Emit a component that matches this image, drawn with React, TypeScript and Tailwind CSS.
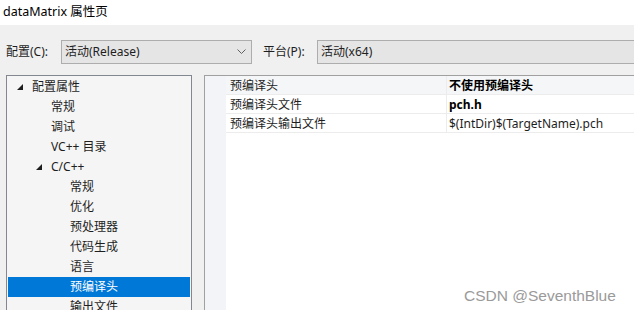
import React from 'react';

const font = "font-['Noto_Sans','Noto_Sans_CJK_SC',sans-serif]";

const Triangle = () => (
  <svg width="6" height="6" viewBox="0 0 6 6" className="shrink-0">
    <polygon points="6,0 6,6 0,6" fill="#1e1e1e" />
  </svg>
);

type Node = { label: string; level: number; expanded?: boolean; selected?: boolean };

const tree: Node[] = [
  { label: '配置属性', level: 0, expanded: true },
  { label: '常规', level: 1 },
  { label: '调试', level: 1 },
  { label: 'VC++ 目录', level: 1 },
  { label: 'C/C++', level: 1, expanded: true },
  { label: '常规', level: 2 },
  { label: '优化', level: 2 },
  { label: '预处理器', level: 2 },
  { label: '代码生成', level: 2 },
  { label: '语言', level: 2 },
  { label: '预编译头', level: 2, selected: true },
  { label: '输出文件', level: 2 },
];

const indent = ['pl-[9px]', 'pl-[28px]', 'pl-[47px]'];

const rows = [
  { name: '预编译头', value: '不使用预编译头', bold: true },
  { name: '预编译头文件', value: 'pch.h', bold: true },
  { name: '预编译头输出文件', value: '$(IntDir)$(TargetName).pch', bold: false },
];

const App = () => {
  return (
    <div className={`w-[634px] h-[310px] overflow-hidden bg-[#f0f0f0] text-[12px] text-[#1e1e1e] relative ${font}`}>
      {/* title */}
      <div className="h-[25px] bg-white flex items-center pl-[3px] text-[12.5px] text-black">
        dataMatrix 属性页
      </div>

      {/* config row */}
      <div className="flex items-center mt-[15px] h-[24px] whitespace-nowrap">
        <span className="w-[61px] shrink-0 pl-[6px]">配置(C):</span>
        <div className="w-[191px] shrink-0 h-[24px] border border-[#adadad] bg-[#e5e5e5] flex items-center justify-between pl-[3px] pr-[5px]">
          <span>活动(Release)</span>
          <svg width="9" height="6" viewBox="0 0 9 6">
            <polyline points="0.5,0.5 4.5,4.5 8.5,0.5" fill="none" stroke="#606060" strokeWidth="1" />
          </svg>
        </div>
        <span className="w-[65px] shrink-0 pl-[11px]">平台(P):</span>
        <div className="w-[330px] shrink-0 h-[24px] border border-[#adadad] bg-[#e5e5e5] flex items-center pl-[3px]">
          活动(x64)
        </div>
      </div>

      {/* panels */}
      <div className="flex mt-[11px] h-[260px]">
        <div className="ml-[6px] w-[186px] border border-[#828790] bg-[#f5f5f5] px-[1px] pt-[1px] shrink-0">
          {tree.map((n, i) => (
            <div
              key={i}
              className={`h-[20px] flex items-center whitespace-nowrap ${indent[n.level]} ${n.selected ? 'bg-[#0078d7] text-white' : ''}`}
            >
              <span className="w-[15px] shrink-0 flex items-center">{n.expanded ? <Triangle /> : null}</span>
              <span>{n.label}</span>
            </div>
          ))}
        </div>

        <div className="ml-[12px] flex-1 border-l border-t border-[#a0a0a0] bg-white flex">
          <div className="w-[21px] bg-[#f2f4f8] shrink-0" />
          <div className="flex-1">
            {rows.map((r, i) => (
              <div
                key={i}
                className={`flex h-[19px] border-b border-[#ececec] whitespace-nowrap ${i === 0 ? 'bg-[#f5f6f8]' : ''}`}
              >
                <div className="w-[221px] pl-[4px] pt-[2px] flex items-center border-r border-[#ececec]">{r.name}</div>
                <div className={`flex-1 pl-[2px] pt-[2px] flex items-center ${r.bold ? 'font-bold text-black' : ''}`}>{r.value}</div>
              </div>
            ))}
          </div>
        </div>
      </div>

      <div className="absolute left-[464px] top-[284px] text-[15.5px] text-[#9a9a9a] font-['Liberation_Sans',sans-serif]">
        CSDN @SeventhBlue
      </div>
    </div>
  );
};

export default App;
